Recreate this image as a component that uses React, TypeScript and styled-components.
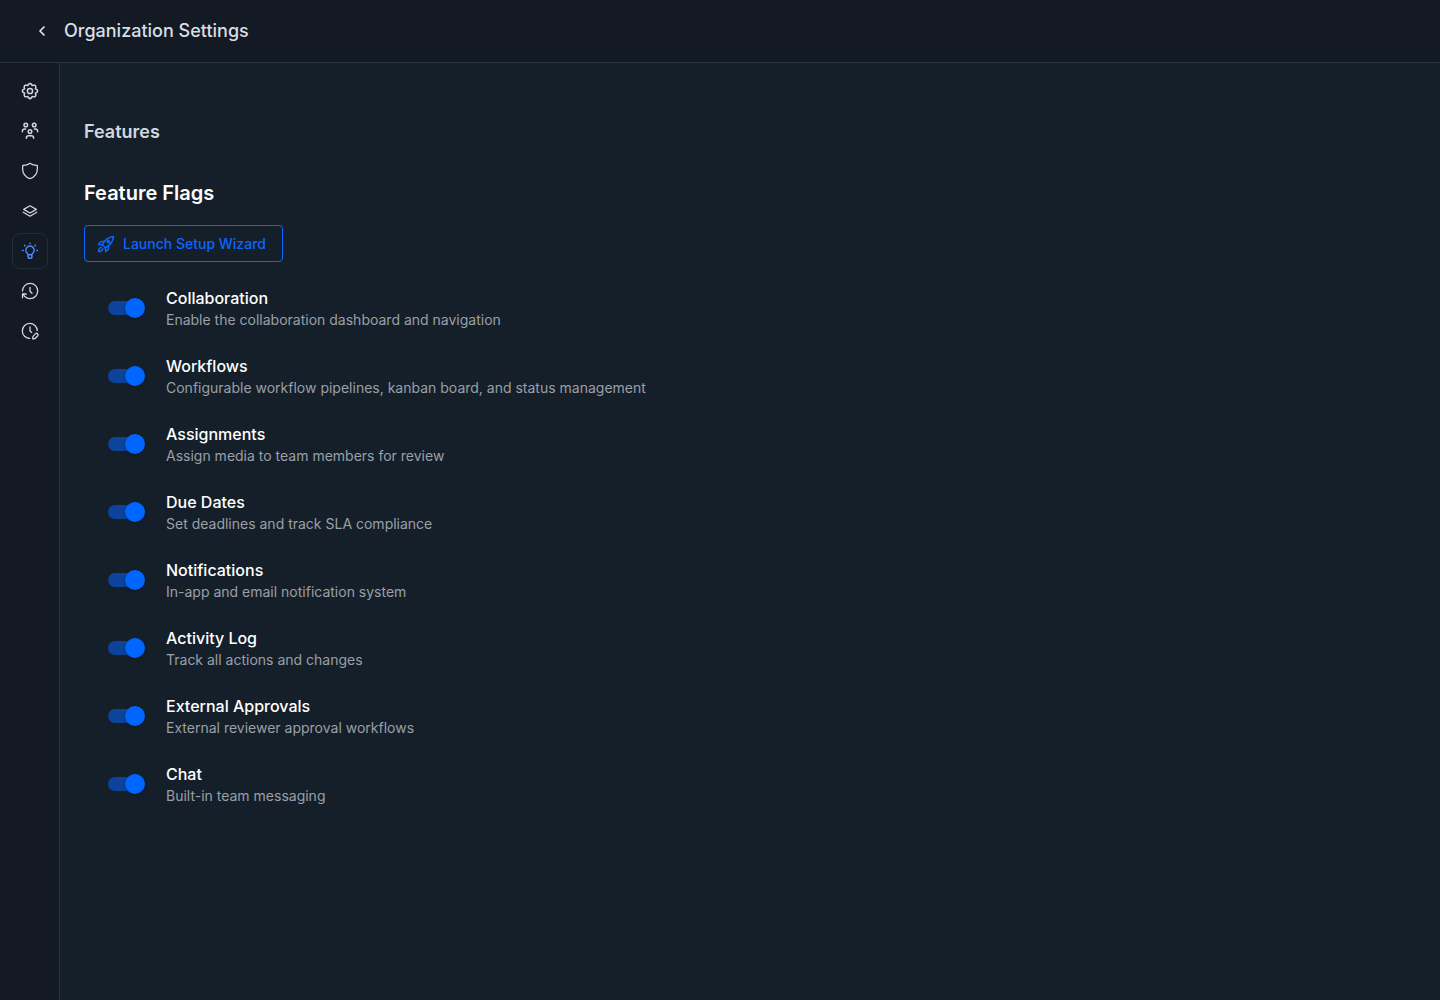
import React, { useState } from "react";
import styled, { createGlobalStyle } from "styled-components";

const GlobalStyle = createGlobalStyle`
  *, *::before, *::after { box-sizing: border-box; }
  body {
    margin: 0;
    background: #151f2a;
    color: #fff;
    font-family: Inter, "Liberation Sans", sans-serif;
  }
`;

const Page = styled.div`
  display: flex;
  flex-direction: column;
  min-height: 100vh;
`;

const Header = styled.header`
  display: flex;
  align-items: center;
  gap: 10px;
  height: 63px;
  padding: 0 30px;
  background: #131a24;
  border-bottom: 1px solid #263340;
`;

const BackButton = styled.button`
  display: grid;
  place-items: center;
  width: 24px;
  height: 24px;
  padding: 0;
  border: 0;
  background: none;
  color: #e2e6ec;
  cursor: pointer;
`;

const PageTitle = styled.h1`
  margin: 0;
  font-size: 18px;
  line-height: 28px;
  font-weight: 500;
  color: #d9dee6;
`;

const Body = styled.div`
  display: flex;
  flex: 1;
`;

const Sidebar = styled.nav`
  display: flex;
  flex-direction: column;
  gap: 4px;
  flex: none;
  width: 60px;
  padding: 10px 12px;
  background: #131a24;
  border-right: 1px solid #263340;
`;

const NavLink = styled.a<{ $active?: boolean }>`
  display: grid;
  place-items: center;
  width: 36px;
  height: 36px;
  border: 1px solid ${(p) => (p.$active ? "#222d3a" : "transparent")};
  border-radius: 8px;
  color: ${(p) => (p.$active ? "#4c8dfb" : "#d1d7e0")};
`;

const Main = styled.main`
  flex: 1;
  min-width: 0;
  padding: 56px 24px;
`;

const SectionTitle = styled.h2`
  margin: 0 0 34px;
  font-size: 18px;
  line-height: 26px;
  font-weight: 600;
  color: #d1d7e0;
`;

const Heading = styled.h3`
  margin: 0 0 18px;
  font-size: 20px;
  line-height: 28px;
  font-weight: 600;
`;

const WizardButton = styled.button`
  display: flex;
  align-items: center;
  gap: 8px;
  height: 37px;
  padding: 0 16px 0 12px;
  border: 1px solid #0a66ff;
  border-radius: 4px;
  background: none;
  color: #0a66ff;
  font: 500 14px/24px Inter, "Liberation Sans", sans-serif;
  cursor: pointer;
`;

const FlagList = styled.ul`
  display: flex;
  flex-direction: column;
  gap: 24px;
  margin: 24px 0 0;
  padding: 0 24px;
  list-style: none;
`;

const FlagRow = styled.label`
  display: flex;
  align-items: center;
  gap: 24px;
  width: fit-content;
  cursor: pointer;
`;

const Switch = styled.input`
  appearance: none;
  display: flex;
  align-items: center;
  flex: none;
  width: 34px;
  height: 14px;
  margin: 0;
  border-radius: 7px;
  background: ${(p) => (p.checked ? "#0d439a" : "#4b5563")};
  cursor: pointer;

  &::before {
    content: "";
    flex: none;
    width: 20px;
    height: 20px;
    margin-left: ${(p) => (p.checked ? "17px" : "-3px")};
    border-radius: 50%;
    background: ${(p) => (p.checked ? "#0066ff" : "#d1d7e0")};
    box-shadow: 0 1px 3px rgba(0, 0, 0, 0.3);
  }
`;

const FlagText = styled.span`
  display: flex;
  flex-direction: column;
`;

const FlagName = styled.span`
  font-size: 16px;
  line-height: 24px;
  font-weight: 500;
`;

const FlagDescription = styled.span`
  font-size: 14px;
  line-height: 20px;
  color: #9a9fa6;
`;

const Icon = ({ children, size = 18, width = 1.5 }: { children: React.ReactNode; size?: number; width?: number }) => (
  <svg width={size} height={size} viewBox="0 0 18 18" fill="none" stroke="currentColor" strokeWidth={width} strokeLinecap="round" strokeLinejoin="round" aria-hidden="true">
    {children}
  </svg>
);

const navItems = [
  {
    label: "General",
    icon: (
      <>
        <path d="M6.8 3.6L7.6 2.1Q9 .7 10.4 2.1L11.2 3.6L12.9 3.1Q14.8 3.2 14.9 5.1L14.4 6.8L15.9 7.6Q17.3 9 15.9 10.4L14.4 11.2L14.9 12.9Q14.8 14.8 12.9 14.9L11.2 14.4L10.4 15.9Q9 17.3 7.6 15.9L6.8 14.4L5.1 14.9Q3.2 14.8 3.1 12.9L3.6 11.2L2.1 10.4Q.7 9 2.1 7.6L3.6 6.8L3.1 5.1Q3.2 3.2 5.1 3.1Z" />
        <circle cx="9" cy="9" r="2.6" />
      </>
    ),
  },
  {
    label: "Teams",
    icon: (
      <>
        <circle cx="4.8" cy="3" r="1.8" />
        <circle cx="13.2" cy="3" r="1.8" />
        <circle cx="9" cy="9.6" r="1.8" />
        <path d="M1.4 9.8V9.2Q1.4 7 3.7 7H4.6M16.6 9.8V9.2Q16.6 7 14.3 7H13.4M5.4 16.3V16Q5.4 13.8 7.7 13.8H10.3Q12.6 13.8 12.6 16V16.3" />
      </>
    ),
  },
  {
    label: "Security",
    width: 1.3,
    icon: <path d="M9 1.3Q12 3.5 16.2 3.4C17 9 16.4 14.2 9 16.7C1.6 14.2 1 9 1.8 3.4Q6 3.5 9 1.3Z" />,
  },
  {
    label: "Layers",
    width: 1.3,
    icon: <path d="M9 3.8 15.3 7.4 9 11 2.7 7.4ZM2.3 10.3 9 14.2 15.7 10.3" />,
  },
  {
    label: "Features",
    active: true,
    icon: (
      <>
        <path d="M7.1 12.7Q7 11.8 6 11A4.1 4.1 0 1 1 12 11Q11 11.8 10.9 12.7ZM7.1 12.7V15.2Q7.1 16.2 8 16.2H10Q10.9 16.2 10.9 15.2V12.7" />
        <path d="M9 1.3V1.5M3.7 3.4 3.9 3.6M14.3 3.4 14.1 3.6M1.6 8.5H2.1M16.4 8.5H15.9" strokeWidth="1.6" />
      </>
    ),
  },
  {
    label: "History",
    width: 1.3,
    icon: (
      <>
        <path d="M1.5 9A7.6 7.6 0 1 1 9 16.6Q4.6 16.4 2.2 12.3" />
        <path d="M1.5 15.8V12H5.3M9 5.4V9.2L11 11.2" />
      </>
    ),
  },
  {
    label: "Scheduling",
    width: 1.3,
    icon: (
      <>
        <path d="M8.8 16.4A7.5 7.5 0 1 1 16.3 8.6M9 4.8V9L10.7 10.4" />
        <path d="M11.7 16.9 12 14.4 14.7 11.6Q15.5 10.9 16.5 11.8Q17.5 12.8 16.8 13.7L14.1 16.5Z" />
      </>
    ),
  },
];

const flags = [
  ["Collaboration", "Enable the collaboration dashboard and navigation"],
  ["Workflows", "Configurable workflow pipelines, kanban board, and status management"],
  ["Assignments", "Assign media to team members for review"],
  ["Due Dates", "Set deadlines and track SLA compliance"],
  ["Notifications", "In-app and email notification system"],
  ["Activity Log", "Track all actions and changes"],
  ["External Approvals", "External reviewer approval workflows"],
  ["Chat", "Built-in team messaging"],
];

function FeatureFlag({ name, description }: { name: string; description: string }) {
  const [enabled, setEnabled] = useState(true);
  return (
    <li>
      <FlagRow>
        <Switch type="checkbox" role="switch" checked={enabled} onChange={(e) => setEnabled(e.target.checked)} />
        <FlagText>
          <FlagName>{name}</FlagName>
          <FlagDescription>{description}</FlagDescription>
        </FlagText>
      </FlagRow>
    </li>
  );
}

export default function App() {
  return (
    <>
      <GlobalStyle />
      <Page>
        <Header>
          <BackButton type="button" aria-label="Back">
            <Icon width={1.7}>
              <path d="M11 5 7 9 11 13" />
            </Icon>
          </BackButton>
          <PageTitle>Organization Settings</PageTitle>
        </Header>
        <Body>
          <Sidebar aria-label="Settings">
            {navItems.map((item) => (
              <NavLink key={item.label} href="#" aria-label={item.label} $active={item.active} aria-current={item.active ? "page" : undefined}>
                <Icon width={item.width}>{item.icon}</Icon>
              </NavLink>
            ))}
          </Sidebar>
          <Main>
            <SectionTitle>Features</SectionTitle>
            <Heading>Feature Flags</Heading>
            <WizardButton type="button">
              <Icon>
                <path d="M5.4 9.8Q8.6 2.4 16.6 1.4Q15.7 9.3 8.3 12.7Z" />
                <circle cx="11.4" cy="6.7" r="1.1" />
                <path d="M7.3 6.4H4.6Q3.4 6.5 1.5 9.4L5.4 9.8M11.6 10.7V13.4Q11.5 14.6 8.7 16.5L8.3 12.7M4.3 12.3Q2 12.6 1.4 16.6Q5.3 16.1 5.8 13.8" />
              </Icon>
              Launch Setup Wizard
            </WizardButton>
            <FlagList>
              {flags.map(([name, description]) => (
                <FeatureFlag key={name} name={name} description={description} />
              ))}
            </FlagList>
          </Main>
        </Body>
      </Page>
    </>
  );
}
